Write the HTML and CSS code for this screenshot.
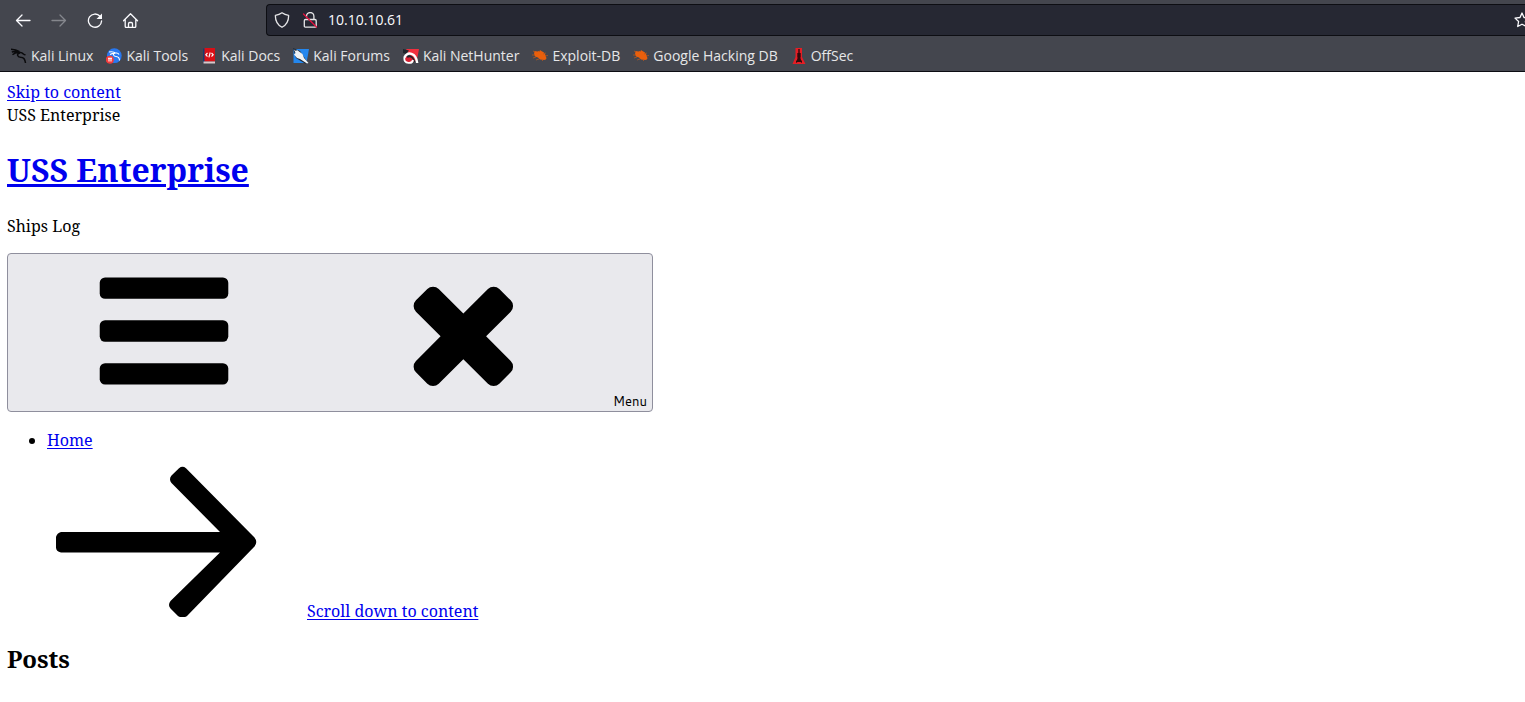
FILE: index.html
```
<!DOCTYPE html>
<html lang="en">
<head>
<meta charset="utf-8">
<title>USS Enterprise</title>
<link rel="stylesheet" href="styles.css">
</head>
<body>
<div class="browser">
  <div class="toolbar">
    <div class="nav">
      <button class="tool" type="button" aria-label="Back"><svg viewBox="0 0 16 16"><path d="M15 8.500H1.500M7 3 1.500 8.500 7 14"/></svg></button>
      <button class="tool" type="button" aria-label="Forward" disabled><svg viewBox="0 0 16 16"><path d="M1 8.500h13.500M9 3l5.500 5.500L9 14"/></svg></button>
      <button class="tool" type="button" aria-label="Reload"><svg viewBox="0 0 16 16"><path d="M13 4.300A6.600 6.600 0 1 0 14.600 9"/><path class="solid" d="M15 1.500V7H9.500z"/></svg></button>
      <button class="tool" type="button" aria-label="Home"><svg viewBox="0 0 16 16"><path d="M.5 8.700 7.500 1.700l7 7M2.200 7.500v6.700q0 1.300 1.300 1.300h8q1.300 0 1.300-1.300V7.500M5.500 15.500v-3.800q0-1.200 1.200-1.200h1.600q1.200 0 1.200 1.200v3.800"/></svg></button>
    </div>
    <div class="urlbar">
      <svg class="glyph" viewBox="0 0 16 16"><path d="M8 .8c2 1.500 4 2.200 6.600 2.500C14.800 9 13 12.600 8 15.300 3 12.600 1.200 9 1.400 3.300 4 3 6 2.300 8 .8z"/></svg>
      <svg class="glyph lock" viewBox="0 0 16 16"><path d="M4.500 5V4.200a3.700 3.700 0 0 1 7.400 0V7.500M3.500 7.500h9.500q1.200 0 1.200 1.200v5.300q0 1.200-1.200 1.200h-9.500q-1.200 0-1.200-1.200V8.700Q2.300 7.500 3.500 7.500z"/><path class="slash" d="M1.500 2 14.500 15"/></svg>
      <input class="address" type="text" aria-label="Address" value="10.10.10.61">
      <button class="star" type="button" aria-label="Bookmark"><svg class="glyph" viewBox="0 0 16 16"><path d="m8 1 2 4.500 5 .6-3.600 3.400.9 5L8 12.200 3.700 14.500l.9-5L1 6.100l5-.6z"/></svg></button>
    </div>
  </div>
  <nav class="bookmarks" aria-label="Bookmarks">
    <a href="#"><svg viewBox="0 0 16 16"><path class="dragon" d="M0 1.200q5 .2 8.500 2.500M.8 4Q5 2.700 9 4.500M1.500 6.700Q4 4.500 7.500 4.500M8 4.200q3-.2 5 2.300M9 5C5 6 6.500 9 9.500 9.200q4.500 0 5 5.800M13 6.500l1.500.3"/></svg>Kali Linux</a>
    <a href="#"><svg viewBox="0 0 16 16"><circle cx="8.300" cy="7.700" r="7.400" fill="#2878f0"/><path class="whisk" d="M3 4q4-1 7 1.300M4 6.500q3-1.500 5-1M9 5c-3 1-1 3.500 1 3.500 3 .2 3.500 2 3.500 4M10 5q2-.3 3 1.500"/><circle cx="3.800" cy="11.700" r="4" fill="#f23b3b"/><path class="whisk" d="M2 10.300h4M3 10.500v3M5 10.500v3"/></svg>Kali Tools</a>
    <a href="#"><svg viewBox="0 0 16 16"><path fill="#173c70" d="M2 .5h3v14H2z"/><path fill="#d90f16" d="M3.500 0H14v13.500H3.500z"/><path fill="#d8c8ca" d="M2.500 13.500H14v2H2.500z"/><path class="whisk" d="M6.500 5 4.800 6.800l1.700 1.700M10.500 5l1.700 1.800-1.700 1.700M9.200 4.500l-1.300 4.800"/></svg>Kali Docs</a>
    <a href="#"><svg viewBox="0 0 16 16"><path fill="#2487ee" d="M.5 1H16l-2.500 14H.5z"/><path fill="#1e2835" d="m0 0 7 3 8 12-3 .5L3 10z"/><path fill="#eef2f5" d="m1 1.500 2 1.500 1-1L9.500 6l1.500 4 4.500 5-1.500.4-7-4.400-3-1L1 6.500 2.500 5z"/></svg>Kali Forums</a>
    <a href="#"><svg viewBox="0 0 16 16"><path fill="#f12f3e" d="M3 1h13l-2.500 13L6 6z"/><path fill="#20252b" d="m0 1 6 1.500L3 6 0 5z"/><path fill="#d62032" d="M2 8h9v6H2z"/><path fill="none" stroke="#fff" stroke-width="2.400" d="M1.500 9.500Q4 4.500 8.500 5.800q5 1.700 5.700 9.200"/><path fill="none" stroke="#20252b" stroke-width="1.500" d="M4 9.200q3-1.800 5.200.3t2.300 4.500"/><path fill="none" stroke="#fff" stroke-width="1.800" d="M1.500 9q-1 5.500 4 5.800 4 .4 4.500-2.800"/></svg>Kali NetHunter</a>
    <a href="#"><svg viewBox="0 0 16 16"><path fill="#e95f0c" d="m2.500 3 3 .5 3-1 3.500 2 1.500 2.500 1 3.500-2 1.500-4.500-.5-2-2L3 8.500 2 6z"/><path class="legs" d="M3 4 1 3M7 4l2-2M11 6l3-1M13 8l3-.5M3 7H0M4 9l-3 1M7 11l-3 1M10 12l1 1M13 11l1 1"/></svg>Exploit-DB</a>
    <a href="#"><svg viewBox="0 0 16 16"><path fill="#e95f0c" d="m2.500 3 3 .5 3-1 3.500 2 1.500 2.500 1 3.500-2 1.500-4.500-.5-2-2L3 8.500 2 6z"/><path class="legs" d="M3 4 1 3M7 4l2-2M11 6l3-1M13 8l3-.5M3 7H0M4 9l-3 1M7 11l-3 1M10 12l1 1M13 11l1 1"/></svg>Google Hacking DB</a>
    <a href="#"><svg viewBox="0 0 16 16"><path fill="#e51d24" d="M4.500 0h6.500v9l3.500 7h-13l3-7z"/><path fill="#300a0c" d="M7.300 1h1.400v4h1v4.500h-.4l.7 2.500 1 1v2l-1.500-1h-3L5 15v-2l1-1 .7-2.500h-.4V5h1z"/></svg>OffSec</a>
  </nav>
</div>
<div class="page">
  <a href="#content">Skip to content</a>
  <div>USS Enterprise</div>
  <h1><a href="#">USS Enterprise</a></h1>
  <p class="tagline">Ships Log</p>
  <button class="menu" type="button"><svg class="picture" viewBox="0 0 27 32"><rect y="4.571" width="27.429" height="4.571" rx="1.143"/><rect y="13.714" width="27.429" height="4.571" rx="1.143"/><rect y="22.857" width="27.429" height="4.571" rx="1.143"/></svg><svg class="picture" viewBox="0 0 25 32"><path d="M23.179 23.607q0 0.714-0.500 1.214l-2.429 2.429q-0.500 0.500-1.214 0.500t-1.214-0.500l-5.250-5.250-5.250 5.250q-0.500 0.500-1.214 0.500t-1.214-0.500l-2.429-2.429q-0.500-0.500-0.500-1.214t0.500-1.214l5.250-5.250-5.250-5.250q-0.500-0.500-0.500-1.214t0.500-1.214l2.429-2.429q0.500-0.500 1.214-0.500t1.214 0.500l5.250 5.250 5.250-5.250q0.500-0.500 1.214-0.500t1.214 0.500l2.429 2.429q0.500 0.500 0.500 1.214t-0.500 1.214l-5.250 5.250 5.250 5.250q0.500 0.500 0.500 1.214z"/></svg>Menu</button>
  <ul>
    <li><a href="#">Home</a></li>
  </ul>
  <a href="#content"><svg class="picture" viewBox="0 0 300 150"><path d="M54 65H213L164.500 16q-3-4 0-7.500L172 1.200q3.500-2.800 7 0L247.500 70.500q3.500 4.500 0 9L180 149q-1 1-2.500 1h-4q-1.500 0-2.500-1l-7.500-7.500q-3-3.500 0-7.500L213 85.500H54q-5-1-5-5V70q1-4 5-5z"/></svg>Scroll down to content</a>
  <h2 id="content">Posts</h2>
</div>
</body>
</html>
```
FILE: styles.css
```
body {
  margin: 0;
  background: #fff;
  color: #000;
  overflow: hidden;
}

svg {
  flex: none;
}

.browser {
  background: #44464e;
  border-bottom: 1px solid #0c0c12;
  color: #e6e6e8;
  font-family: "Open Sans", "Noto Sans", sans-serif;
}

.toolbar {
  display: flex;
  align-items: center;
  padding-top: 4px;
}

.nav {
  display: flex;
  gap: 20px;
  padding-left: 15px;
  flex: 0 0 251px;
  box-sizing: border-box;
}

.tool,
.star {
  display: flex;
  border: 0;
  padding: 0;
  background: none;
  color: #fbfbfe;
}

.tool:disabled {
  color: #85878d;
}

.tool svg,
.glyph {
  width: 16px;
  height: 16px;
  fill: none;
  stroke: currentColor;
  stroke-width: 1.3;
  stroke-linecap: round;
  stroke-linejoin: round;
}

.tool .solid {
  fill: currentColor;
  stroke: none;
}

.urlbar {
  flex: 1;
  display: flex;
  align-items: center;
  height: 30px;
  margin-left: 15px;
  padding-left: 7px;
  border: 1px solid #0d0e13;
  border-right: 0;
  border-radius: 4px 0 0 4px;
  background: #262833;
}

.lock {
  margin-left: 12px;
}

.lock .slash {
  stroke: #e3103e;
}

.address {
  flex: 1;
  min-width: 0;
  margin-left: 10px;
  padding: 0;
  border: 0;
  outline: 0;
  background: none;
  color: #fbfbfe;
  font: 14px/22px "Open Sans", "Noto Sans", sans-serif;
}

.star {
  margin-right: -5px;
}

.bookmarks {
  display: flex;
  align-items: center;
  gap: 13px;
  padding: 10px 0 5px 11px;
  font-size: 14px;
}

.bookmarks a {
  display: flex;
  align-items: center;
  gap: 4px;
  color: inherit;
  line-height: 20px;
  text-decoration: none;
  white-space: nowrap;
}

.bookmarks svg {
  width: 16px;
  height: 16px;
}

.dragon,
.whisk,
.legs {
  fill: none;
  stroke: #0a0a0c;
  stroke-width: 1.5;
}

.whisk {
  stroke: #fff;
  stroke-width: 1.1;
}

.legs {
  stroke: #b0561f;
  stroke-width: 0.8;
}

.page {
  padding: 9px 7px 8px;
  font: 16px/23px "Noto Serif", "Droid Serif", "DejaVu Serif", serif;
}

.page a {
  color: #0000ee;
  text-underline-offset: 2px;
}

.page h1 {
  margin: 21px 0 23px;
  font-size: 32px;
  line-height: 44px;
}

.tagline {
  margin: 0 0 15px;
}

.picture {
  width: 300px;
  height: 150px;
  overflow: visible;
  fill: #000;
}

.menu {
  display: block;
  padding: 2px 5px 1px;
  border: 1px solid #8f8f9d;
  border-radius: 4px;
  background: #e9e9ed;
  color: #000;
  font: 13px/18px Cantarell, "Open Sans", "Noto Sans", sans-serif;
}

.page ul {
  margin: 17px 0 15px;
  padding-left: 40px;
}

.page h2 {
  margin: 19px 0;
  font-size: 24px;
  line-height: 33px;
}
```
